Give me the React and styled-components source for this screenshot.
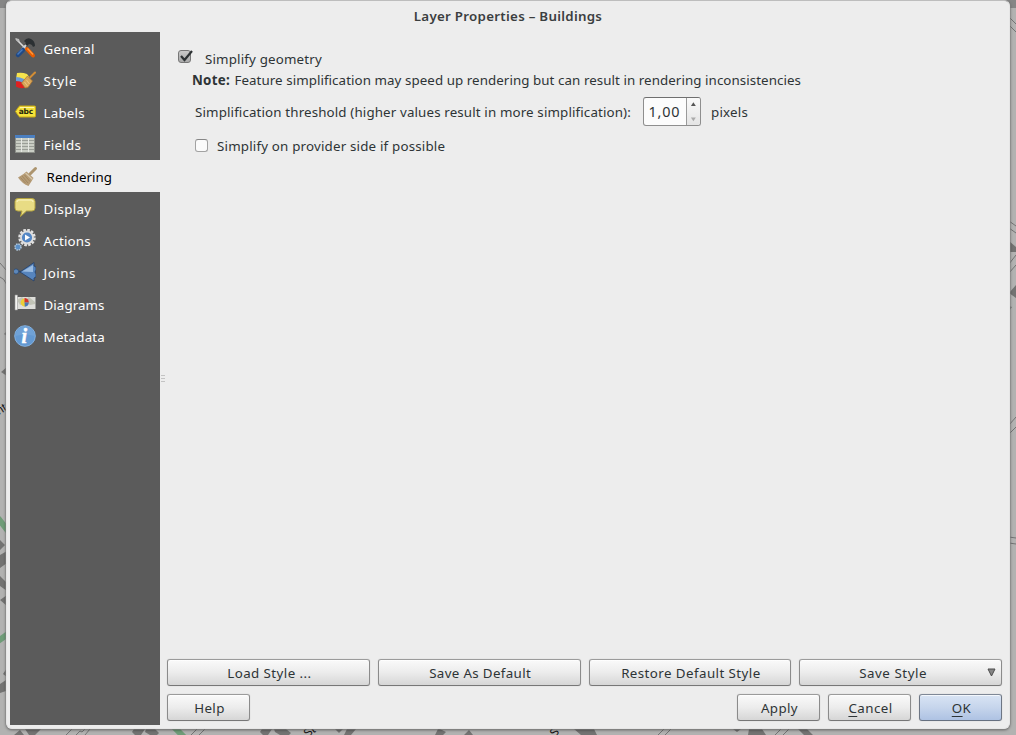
import React from "react";
import styled, { createGlobalStyle } from "styled-components";

const GlobalStyle = createGlobalStyle`
  * { box-sizing: border-box; }
  html, body { margin: 0; height: 100%; overflow: hidden; }
  body {
    font-family: "Noto Sans", "Open Sans", sans-serif;
    font-size: 13.33px;
    line-height: 18px;
    color: #2e3436;
  }
  button, input { font: inherit; color: inherit; margin: 0; }
`;

const Desktop = styled.div`
  position: relative;
  height: 735px;
  padding: 0 6px 6px;
  background: #b2b2b1;
  overflow: hidden;
`;

const MapCanvas = styled.svg`
  position: absolute;
  inset: 0;
`;

const Dialog = styled.section`
  position: relative;
  display: flex;
  flex-direction: column;
  height: 729px;
  padding: 0 7px 3px 3px;
  background: #ededed;
  border: 1px solid #e6e6e6;
  border-top-color: #bdbdbd;
  border-radius: 6px;
  box-shadow: 0 0 0 0.5px #8a8a8a, 0 1px 3px rgba(0, 0, 0, 0.5);
`;

const TitleBar = styled.header`
  height: 31px;
  flex: none;
  text-align: center;
  padding-top: 6px;
  margin-right: -4px;
  font-weight: 600;
  color: #3b3e3f;
`;

const Label = styled.span`
  white-space: pre;
  letter-spacing: ${(p) => p.$track || 0}px;
`;

const FieldLabel = styled(Label)`
  width: 448px;
`;

const NoteHeading = styled.b`
  margin-right: 1px;
  letter-spacing: 0.25px;
`;

const Body = styled.div`
  display: flex;
  flex: 1;
  min-height: 0;
`;

const Sidebar = styled.nav`
  width: 150px;
  flex: none;
  background: #5b5b5b;
`;

const NavItem = styled.div`
  display: flex;
  align-items: center;
  gap: 7.6px;
  height: 32px;
  padding: 2px 0 0 ${(p) => (p.$active ? 7 : 4)}px;
  background: ${(p) => (p.$active ? "#ededed" : "transparent")};
  color: ${(p) => (p.$active ? "#000" : "#fff")};
`;

const NavIcon = styled.svg`
  flex: none;
  width: 22px;
  height: 22px;
  margin-top: -2px;
`;

const Splitter = styled.div`
  display: flex;
  flex-direction: column;
  justify-content: center;
  align-items: center;
  gap: 2px;
  width: 7px;
  padding-right: 1px;
  flex: none;
`;

const Grip = styled.i`
  width: 4px;
  height: 1px;
  background: #c3c3c3;
`;

const Main = styled.main`
  display: flex;
  flex-direction: column;
  flex: 1;
  min-width: 0;
  padding-bottom: 4px;
`;

const Options = styled.div`
  flex: 1;
  padding-top: 16px;
`;

const OptionRow = styled.div`
  display: flex;
  align-items: center;
  height: ${(p) => p.$height}px;
  padding-left: ${(p) => p.$indent}px;
`;

const CheckBox = styled.span`
  width: 13px;
  height: 13px;
  flex: none;
  margin: ${(p) => (p.$checked ? "-4px 14px 0 0" : "-1px 9px 0 0")};
  border: 1px solid ${(p) => (p.$checked ? "#777" : "#a2a2a2")};
  border-top-color: ${(p) => (p.$checked ? "#777" : "#868686")};
  border-radius: 3px;
  background: ${(p) => (p.$checked ? "linear-gradient(#c9c9c9, #a9a9a9)" : "#fbfbfb")};
`;

const Tick = styled.svg`
  display: block;
  overflow: visible;
`;

const SpinBox = styled.div`
  display: flex;
  width: 58px;
  height: 29px;
  margin: -1px 10px 0 0;
  border: 1px solid #8e8e8e;
  border-top-color: #6f6f6f;
  border-radius: 3px;
  background: #fcfcfc;
  overflow: hidden;
`;

const SpinValue = styled.span`
  width: 43px;
  padding: 5px 0 0 4.5px;
  font-size: 14.4px;
`;

const SpinArrows = styled.svg`
  width: 14px;
  height: 27px;
  border-left: 1px solid #9a9a9a;
  background: linear-gradient(#fafafa, #e4e4e4);
`;

const StyleButtons = styled.div`
  display: grid;
  grid-template-columns: repeat(4, minmax(0, 1fr));
  gap: 8px;
`;

const DialogButtons = styled.div`
  display: flex;
  gap: 8px;
  margin-top: 8px;
`;

const Spacer = styled.div`
  flex: 1;
`;

const PushButton = styled.button`
  position: relative;
  flex: none;
  width: ${(p) => (p.$wide ? "auto" : "83px")};
  height: 27px;
  padding: 0 ${(p) => (p.$menu ? 17 : 0)}px 0 2px;
  display: flex;
  align-items: center;
  justify-content: center;
  border: 1px solid;
  border-color: ${(p) => (p.$primary ? "#7f8896 #6d7684 #667080" : "#9b9b9b #8b8b8b #777")};
  border-radius: 3px;
  background: ${(p) =>
    p.$primary
      ? "linear-gradient(#d9e4f4, #c6d5ec 50%, #aec2e3)"
      : "linear-gradient(#fafafa, #ececec 50%, #d6d6d6)"};
  box-shadow: inset 0 1px 0 rgba(255, 255, 255, 0.7), 0 0 1px rgba(0, 0, 0, 0.25);
`;

const Mnemonic = styled.span`
  text-decoration: underline 1px;
  text-underline-offset: 3px;
  text-decoration-skip-ink: none;
`;

const MenuArrow = styled.svg`
  position: absolute;
  right: 5px;
  top: 8px;
`;

function MapBackdrop() {
  return (
    <MapCanvas width="1016" height="735" viewBox="0 0 1016 735">
      <path d="M0 0H1016V8H0Z" fill="#868686" />
      <g fill="#737372">
        <path d="M0 540l5 5-5 5zM0 555l7-4v12l-7 5zM0 576l7 7v8l-7-5zM0 600l7-5v11zM3 674l4-6v9zM0 684l6-4v11l-6 2zM4 334l3-3v5zM1 372l6-5v9z" />
        <path d="M14 735l6-5 4 5zM25 729h16l-6 6h-6zM134 729h11l-4 6h-6l-3-3zM146 729h9l4 4-2 2h-7l-5-3zM262 729h10l-4 6h-5l-3-3zM274 729h12l5 4-2 2h-9l-5-3zM335 729h8l-4 4zM347 729h9l-5 6h-7zM438 729h2l6 3-3 3h-8zM464 735l5-5 4 5zM574 729h20l3 6h-16zM733 729h8l-4 3zM749 729h13l4 6h-18zM798 729h9l6 6h-9z" />
        <path d="M1009 241l7 6v5h-7zM1009 293l7-8v13zM1009 306l3 1-3 4z" />
      </g>
      <g stroke="#6f9c78" strokeWidth="6" fill="none">
        <path d="M-2 518l10 13M-2 641l10-7M172 725l12 12" />
      </g>
      <g stroke="#747474" strokeWidth="1" fill="none">
        <path d="M1009 17l7 7M1009 25l7 7M1009 221l7 5M1009 228l7 5M1009 264l7-9M1009 273l7-8M1009 425l7-8M1009 434l7-7M1009 537l7 1M1009 543l7 1" />
        <path d="M0 263l7 8M0 277q4 1 7 8M66 735l6-6M76 735l4-4 2 1 3-3M85 735l5-6M191 735l6-6M199 735l6-6M658 735l6-6M665 735l6-6M775 735l6-6M783 735l6-6" />
      </g>
      <g fontFamily="Liberation Sans" fontSize="12" fill="#161616">
        <text transform="translate(-1 415) rotate(-32)">nt</text>
        <text transform="translate(307 738) rotate(-35)">St</text>
        <text transform="translate(554 738) rotate(-42)">S</text>
      </g>
    </MapCanvas>
  );
}

const icons = {
  general: (
    <>
      <path d="M2 2L13 13" stroke="#d9d9d9" strokeWidth="1.6" />
      <path d="M1 1l4 1 1 3-3-1z" fill="#bbb" />
      <path d="M10 4q3-4 7-2 4 2 4 7l-2 1q-1-3-4-3l-3 3-2-2 2-2z" fill="#2b3033" />
      <path d="M12 8L5 16" stroke="#cfd2d3" strokeWidth="2" />
      <path d="M9 13L4 18" stroke="#204a87" strokeWidth="4.500" strokeLinecap="round" />
      <path d="M8.500 12.500L3.500 17.500" stroke="#4a7bbb" strokeWidth="1.500" />
      <path d="M13 12L19 18.500" stroke="#e85c00" strokeWidth="4" strokeLinecap="round" />
      <path d="M13.500 11.500L19 17.500" stroke="#ff9a3c" strokeWidth="1.300" />
    </>
  ),
  style: (
    <>
      <path d="M3 4q5-1 10 1l3 4-4 5-10-4z" fill="#f7e34c" />
      <path d="M2 8q4 0 8 2v5l-8-3z" fill="#6b9bd6" />
      <path d="M2 12.500q3-1 6 1l4 5q-6 2-10-1z" fill="#df2020" />
      <path d="M15.500 9L21 3.500" stroke="#d28d35" strokeWidth="2" strokeLinecap="round" />
      <path d="M13.500 7l5 5-4.500 6.500-3 .500-3.500-5z" fill="#d9a659" stroke="#a8712e" strokeWidth=".7" />
      <path d="M10.500 13l3 4M12.500 11l3 4" stroke="#f0cc8c" strokeWidth=".8" />
    </>
  ),
  labels: (
    <>
      <path d="M1.500 10.500L5 5.500Q5.300 5 6 5H20.500q1 0 1 1v9q0 1-1 1H6q-.700 0-1-.500z" fill="#f5e23c" stroke="#c9aa14" />
      <path d="M6 6.500h14" stroke="#fff8a8" />
      <text x="4.700" y="13.300" fontFamily="DejaVu Sans" fontWeight="700" fontSize="7.500" textLength="14.500" fill="#27270c">abc</text>
    </>
  ),
  fields: (
    <>
      <path d="M1.500 2.500h19v17h-19z" fill="#c9cdc4" stroke="#8b8e88" />
      <path d="M1 2h20v3H1z" fill="#4b7fc0" />
      <path d="M2 7.500h18M2 10.500h18M2 13.500h18M2 16.500h18" stroke="#9a9e97" strokeWidth="1" />
      <path d="M7.500 5v14M14.500 5v14" stroke="#e6e8e3" />
    </>
  ),
  rendering: (
    <>
      <path d="M13 9L18.500 3.500" stroke="#ac946e" strokeWidth="3" strokeLinecap="round" />
      <path d="M9.500 6.500l7 6.500-1.500 2.500-3.500 5.500q-6-2-10.500-8.500l5.500-3.500z" fill="#b59b75" />
      <path d="M8.500 8l7 6.500" stroke="#d6c7ab" strokeWidth="1.200" />
      <path d="M5 11l6 7M7.500 10l5.500 6.500M3.500 12.500l5 5.500" stroke="#9a8059" strokeWidth=".7" />
    </>
  ),
  display: (
    <>
      <path d="M4 1.500h14q3 0 3 3v6.500q0 3-3 3h-5.500L6.500 19.500 8 14H4q-3 0-3-3V4.500q0-3 3-3z" fill="#e8dc84" stroke="#b5a440" />
      <path d="M3 5q0-2 2-2h12q2 0 2 2" fill="none" stroke="#fbf6c5" />
    </>
  ),
  actions: (
    <>
      <circle cx="13" cy="8.500" r="7.500" fill="none" stroke="#e2e2e2" strokeWidth="2.500" strokeDasharray="2.600 1.327" />
      <circle cx="13" cy="8.500" r="6" fill="#5487c5" stroke="#dedede" strokeWidth="1.800" />
      <path d="M11 5.500l5 3-5 3z" fill="#fff" />
      <circle cx="4" cy="18" r="3" fill="#5b8fc6" stroke="#b4c9dc" strokeWidth="1.500" strokeDasharray="1.500 .856" />
    </>
  ),
  joins: (
    <>
      <path d="M3 10.500h6" stroke="#28466d" strokeWidth="1.500" />
      <circle cx="2" cy="10.500" r="2.600" fill="#5e87b8" stroke="#294a75" strokeWidth=".8" />
      <path d="M6 11L20 1.500v3.500l2 1v3l-1 2 1 2v3l-2 1v3z" fill="#5684bd" stroke="#243f67" strokeWidth=".8" />
      <path d="M8 10.500L19 4v7z" fill="#9abbe0" />
    </>
  ),
  diagrams: (
    <>
      <path d="M2 4h19.500v12H2z" fill="#dededa" />
      <path d="M1 2h2.500v15H1z" fill="#f5f5f3" stroke="#999" strokeWidth=".6" />
      <path d="M3 7l5-3 3 3 4-3 6 5v2l-5 1-3-2-7 2z" fill="#c2c4b7" />
      <path d="M10.500 9.500V5.500a4 4 0 1 0 1 7.900z" fill="#eccf35" />
      <path d="M10.500 9.500V5a4.300 4.300 0 0 1 4.300 4.500z" fill="#d53429" />
      <path d="M10.500 9.500h4.300a4.300 4.300 0 0 1-4 4.200z" fill="#4c78b4" />
    </>
  ),
  metadata: (
    <>
      <circle cx="11" cy="11" r="10.300" fill="#6399d2" stroke="#83b0de" />
      <path d="M1.500 11a9.500 9.500 0 0 1 19 0q-9-3-19 0z" fill="#7dabdc" opacity=".5" />
      <text x="7.500" y="17.500" fontFamily="Liberation Serif" fontStyle="italic" fontWeight="700" fontSize="20" fill="#fff" stroke="#fff" strokeWidth=".5">i</text>
    </>
  ),
};

const pages = [
  ["general", "General", 0.3],
  ["style", "Style", 0.75],
  ["labels", "Labels", 0.2],
  ["fields", "Fields", 0.3],
  ["rendering", "Rendering", 0.03],
  ["display", "Display", 0.35],
  ["actions", "Actions", 0.2],
  ["joins", "Joins", 0.5],
  ["diagrams", "Diagrams", 0.05],
  ["metadata", "Metadata", 0.2],
];

export default function App() {
  return (
    <>
      <GlobalStyle />
      <Desktop>
        <MapBackdrop />
        <Dialog>
          <TitleBar><Label $track={0.27}>Layer Properties – Buildings</Label></TitleBar>
          <Body>
            <Sidebar>
              {pages.map(([id, name, track]) => (
                <NavItem key={id} $active={id === "rendering"}>
                  <NavIcon viewBox="0 0 22 22">{icons[id]}</NavIcon>
                  <Label $track={track}>{name}</Label>
                </NavItem>
              ))}
            </Sidebar>
            <Splitter><Grip /><Grip /><Grip /></Splitter>
            <Main>
              <Options>
                <OptionRow $height={21} $indent={11}>
                  <CheckBox $checked>
                    <Tick width="15" height="12" viewBox="0 0 15 12">
                      <path d="M2 5L5.500 9 13 0" fill="none" stroke="#2d3234" strokeWidth="2.200" />
                    </Tick>
                  </CheckBox>
                  <Label $track={0.17}>Simplify geometry</Label>
                </OptionRow>
                <OptionRow $height={21} $indent={25}>
                  <Label $track={0.07}><NoteHeading>Note:</NoteHeading> Feature simplification may speed up rendering but can result in rendering inconsistencies</Label>
                </OptionRow>
                <OptionRow $height={43} $indent={28}>
                  <FieldLabel $track={0.14}>Simplification threshold (higher values result in more simplification):</FieldLabel>
                  <SpinBox>
                    <SpinValue><Label $track={0.8}>1,00</Label></SpinValue>
                    <SpinArrows viewBox="0 0 13 27">
                      <path d="M4 8L6.500 4 9 8z" fill="#555" />
                      <path d="M4 19.500h5L6.500 23.500z" fill="#aaa" />
                    </SpinArrows>
                  </SpinBox>
                  <Label $track={0.2}>pixels</Label>
                </OptionRow>
                <OptionRow $height={25} $indent={28}>
                  <CheckBox />
                  <Label $track={0.19}>Simplify on provider side if possible</Label>
                </OptionRow>
              </Options>
              <StyleButtons>
                <PushButton $wide><Label $track={0.43}>Load Style ...</Label></PushButton>
                <PushButton $wide><Label $track={0.35}>Save As Default</Label></PushButton>
                <PushButton $wide><Label $track={0.43}>Restore Default Style</Label></PushButton>
                <PushButton $wide $menu>
                  <Label $track={0.55}>Save Style</Label>
                  <MenuArrow width="9" height="9" viewBox="0 0 9 9">
                    <path d="M1 1h7L4.500 8z" fill="#858585" stroke="#4c4c4c" />
                  </MenuArrow>
                </PushButton>
              </StyleButtons>
              <DialogButtons>
                <PushButton><Label $track={0.35}>Help</Label></PushButton>
                <Spacer />
                <PushButton><Label $track={0.4}>Apply</Label></PushButton>
                <PushButton><Label $track={0.45}><Mnemonic>C</Mnemonic>ancel</Label></PushButton>
                <PushButton $primary><Label $track={0.4}><Mnemonic>O</Mnemonic>K</Label></PushButton>
              </DialogButtons>
            </Main>
          </Body>
        </Dialog>
      </Desktop>
    </>
  );
}
